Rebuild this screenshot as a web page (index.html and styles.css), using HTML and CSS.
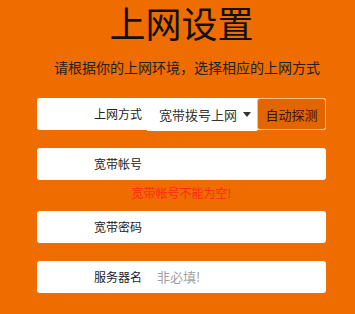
FILE: index.html
```html
<!DOCTYPE html>
<html lang="zh-CN">
<head>
<meta charset="utf-8">
<title>上网设置</title>
<link rel="stylesheet" href="styles.css">
</head>
<body>
<div class="page">
  <h1 class="title">上网设置</h1>
  <p class="subtitle">请根据你的上网环境，选择相应的上网方式</p>
  <form class="form">
    <div class="row">
      <label class="label">上网方式</label>
      <div class="select">
        <span class="select-text">宽带拨号上网</span>
        <svg class="arrow" width="8" height="5" viewBox="0 0 8 5"><path d="M0 0H8L4 5Z" fill="#333"/></svg>
      </div>
      <button type="button" class="detect">自动探测</button>
    </div>
    <div class="row flush">
      <label class="label">宽带帐号</label>
      <span class="field"></span>
    </div>
    <div class="error">宽带帐号不能为空!</div>
    <div class="row">
      <label class="label">宽带密码</label>
      <span class="field"></span>
    </div>
    <div class="row">
      <label class="label">服务器名</label>
      <span class="field placeholder">非必填!</span>
    </div>
  </form>
</div>
</body>
</html>
```

FILE: styles.css
```css
html, body {
  margin: 0;
  padding: 0;
  background: #ee6c00;
}
body {
  font-family: "Noto Sans CJK SC", "Noto Sans", sans-serif;
  color: #222;
}
.page {
  width: 355px;
  height: 314px;
  overflow: hidden;
}
.title {
  margin: 0;
  padding: 0 0 0 37px;
  width: 289px;
  text-align: center;
  font-size: 36px;
  font-weight: normal;
  line-height: 44px;
  color: #111;
}
.subtitle {
  margin: 13px 0 0 54px;
  font-size: 14px;
  line-height: 20px;
  color: #222;
}
.form {
  margin: 21px 0 0 37px;
  width: 289px;
}
.row {
  display: flex;
  align-items: stretch;
  height: 32px;
  background: #fff;
  border-radius: 3px;
  margin-bottom: 18px;
}
.row.flush {
  margin-bottom: 0;
}
.label {
  width: 105px;
  flex: none;
  padding-right: 5px;
  text-align: right;
  font-size: 12px;
  line-height: 32px;
  color: #222;
}
.select {
  width: 110px;
  flex: none;
  display: flex;
  align-items: center;
  box-sizing: border-box;
  padding: 0 6px 0 12px;
  margin-bottom: -1px;
  background: #fff;
  font-size: 13px;
  color: #333;
}
.select-text {
  flex: 1;
}
.arrow {
  flex: none;
}
.detect {
  flex: none;
  width: 69px;
  margin: 0;
  padding: 0;
  border: 1px solid #f6c27a;
  border-radius: 3px;
  background: #e26500;
  font-family: inherit;
  font-size: 13px;
  color: #3a1600;
}
.field {
  flex: 1;
  padding-left: 10px;
  font-size: 13px;
  line-height: 32px;
}
.placeholder {
  color: #a0a0a0;
}
.error {
  margin: 6px 0 11px;
  height: 14px;
  text-align: center;
  font-size: 12px;
  line-height: 14px;
  color: #ff2a1a;
}
```
